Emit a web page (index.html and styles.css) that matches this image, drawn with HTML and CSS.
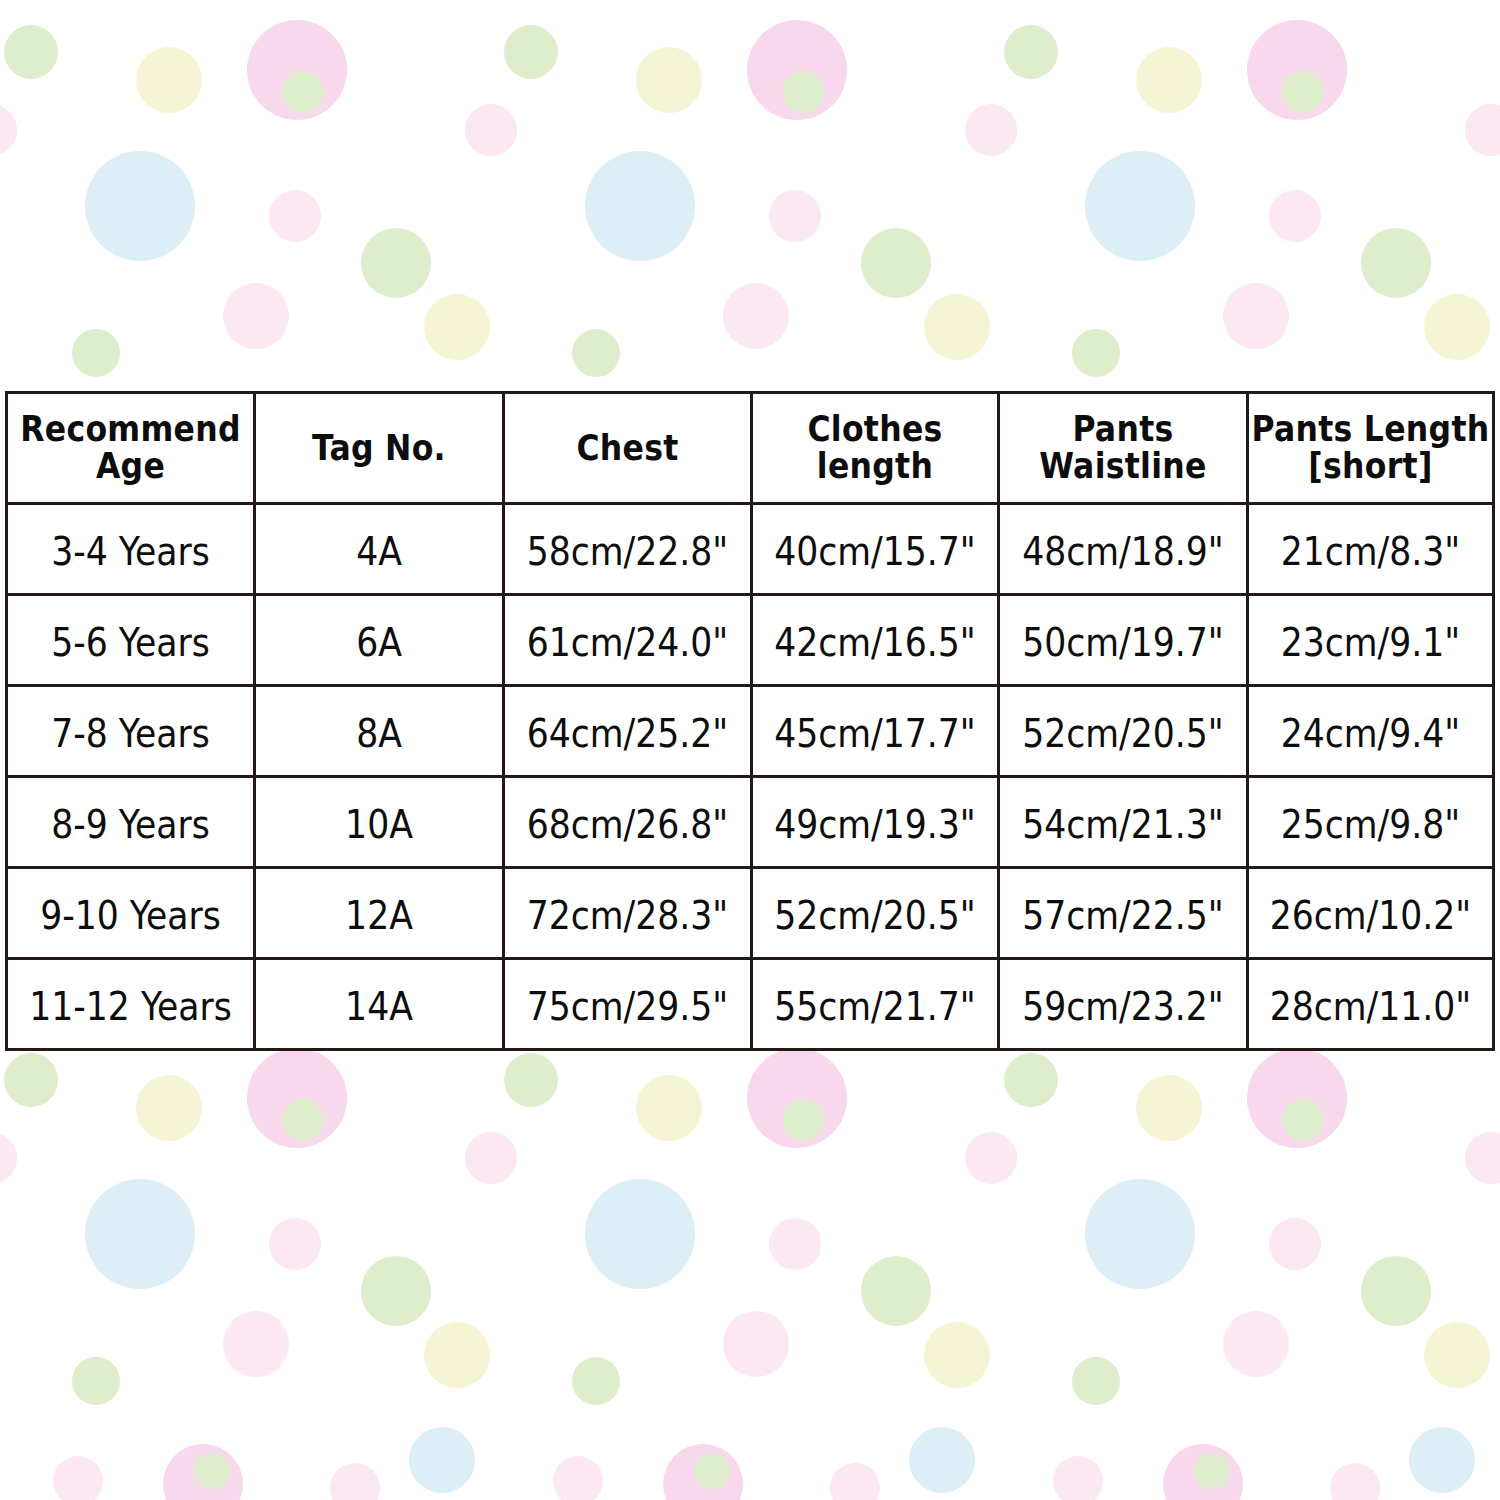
FILE: index.html
```html
<!DOCTYPE html>
<html lang="en">
<head>
<meta charset="utf-8">
<title>Size Chart</title>
<link rel="stylesheet" href="styles.css">
</head>
<body>
<div class="page">
  <svg class="dots" width="1500" height="1500" viewBox="0 0 1500 1500" aria-hidden="true">
    <defs>
      <g id="tile">
        <circle cx="31" cy="52" r="27" fill="#deedcc"/>
        <circle cx="169" cy="80" r="33" fill="#f5f5d6"/>
        <circle cx="297" cy="70" r="50" fill="#f8d8ec"/>
        <circle cx="303" cy="92" r="21" fill="#deedcc"/>
        <circle cx="491" cy="130" r="26" fill="#fbe8f2"/>
        <circle cx="140" cy="206" r="55" fill="#ddeef6"/>
        <circle cx="295" cy="216" r="26" fill="#fbe8f2"/>
        <circle cx="396" cy="263" r="35" fill="#deedcc"/>
        <circle cx="256" cy="316" r="33" fill="#fbe8f2"/>
        <circle cx="457" cy="327" r="33" fill="#f5f5d6"/>
        <circle cx="96" cy="353" r="24" fill="#deedcc"/>
      </g>
      <g id="tail">
        <circle cx="78" cy="1481" r="25" fill="#fbe8f2"/>
        <circle cx="203" cy="1484" r="40" fill="#f8d8ec"/>
        <circle cx="212" cy="1471" r="18" fill="#deedcc"/>
        <circle cx="355" cy="1488" r="25" fill="#fbe8f2"/>
        <circle cx="442" cy="1460" r="33" fill="#ddeef6"/>
      </g>
    </defs>
    <use href="#tile" x="-500" y="0"/>
    <use href="#tile" x="0" y="0"/>
    <use href="#tile" x="500" y="0"/>
    <use href="#tile" x="1000" y="0"/>
    <use href="#tile" x="-500" y="1028"/>
    <use href="#tile" x="0" y="1028"/>
    <use href="#tile" x="500" y="1028"/>
    <use href="#tile" x="1000" y="1028"/>
    <use href="#tail" x="0" y="0"/>
    <use href="#tail" x="500" y="0"/>
    <use href="#tail" x="1000" y="0"/>
  </svg>

  <div class="sheet">
    <table class="chart">
      <colgroup>
        <col class="c1"><col class="c2"><col class="c3"><col class="c4"><col class="c5"><col class="c6">
      </colgroup>
      <thead>
        <tr class="head">
          <th>Recommend<br>Age</th>
          <th>Tag No.</th>
          <th>Chest</th>
          <th>Clothes<br>length</th>
          <th>Pants<br>Waistline</th>
          <th>Pants Length<br>[short]</th>
        </tr>
      </thead>
      <tbody>
        <tr><td>3-4 Years</td><td>4A</td><td>58cm/22.8"</td><td>40cm/15.7"</td><td>48cm/18.9"</td><td>21cm/8.3"</td></tr>
        <tr><td>5-6 Years</td><td>6A</td><td>61cm/24.0"</td><td>42cm/16.5"</td><td>50cm/19.7"</td><td>23cm/9.1"</td></tr>
        <tr><td>7-8 Years</td><td>8A</td><td>64cm/25.2"</td><td>45cm/17.7"</td><td>52cm/20.5"</td><td>24cm/9.4"</td></tr>
        <tr><td>8-9 Years</td><td>10A</td><td>68cm/26.8"</td><td>49cm/19.3"</td><td>54cm/21.3"</td><td>25cm/9.8"</td></tr>
        <tr><td>9-10 Years</td><td>12A</td><td>72cm/28.3"</td><td>52cm/20.5"</td><td>57cm/22.5"</td><td>26cm/10.2"</td></tr>
        <tr><td>11-12 Years</td><td>14A</td><td>75cm/29.5"</td><td>55cm/21.7"</td><td>59cm/23.2"</td><td>28cm/11.0"</td></tr>
      </tbody>
    </table>
  </div>
</div>
</body>
</html>
```

FILE: styles.css
```css
html, body {
  margin: 0;
  padding: 0;
  background: #ffffff;
}

.page {
  position: relative;
  width: 1500px;
  height: 1500px;
  overflow: hidden;
  background: #ffffff;
}

.dots {
  position: absolute;
  left: 0;
  top: 0;
  display: block;
}

.sheet {
  position: relative;
  padding-top: 391px;
  padding-left: 5px;
}

.chart {
  border-collapse: separate;
  border-spacing: 0;
  table-layout: fixed;
  width: 1490px;
  background: #ffffff;
  border-left: 3px solid #231815;
  border-top: 3px solid #231815;
  color: #0d0d0d;
  font-family: "DejaVu Sans Condensed", "DejaVu Sans", sans-serif;
  font-stretch: condensed;
}

.c1 { width: 248px; }
.c2 { width: 249px; }
.c3 { width: 248px; }
.c4 { width: 247px; }
.c5 { width: 249px; }
.c6 { width: 246px; }

.chart th,
.chart td {
  box-sizing: border-box;
  border-right: 3px solid #231815;
  border-bottom: 3px solid #231815;
  padding: 0;
  text-align: center;
  vertical-align: middle;
  white-space: nowrap;
  overflow: visible;
}

.chart th {
  font-weight: bold;
  font-size: 35px;
  line-height: 37px;
  letter-spacing: 0.3px;
}

.chart td {
  font-weight: normal;
  font-size: 38.5px;
  line-height: 44px;
  padding-top: 6px;
}

.head {
  height: 111px;
}

.chart tbody tr {
  height: 91px;
}
```
